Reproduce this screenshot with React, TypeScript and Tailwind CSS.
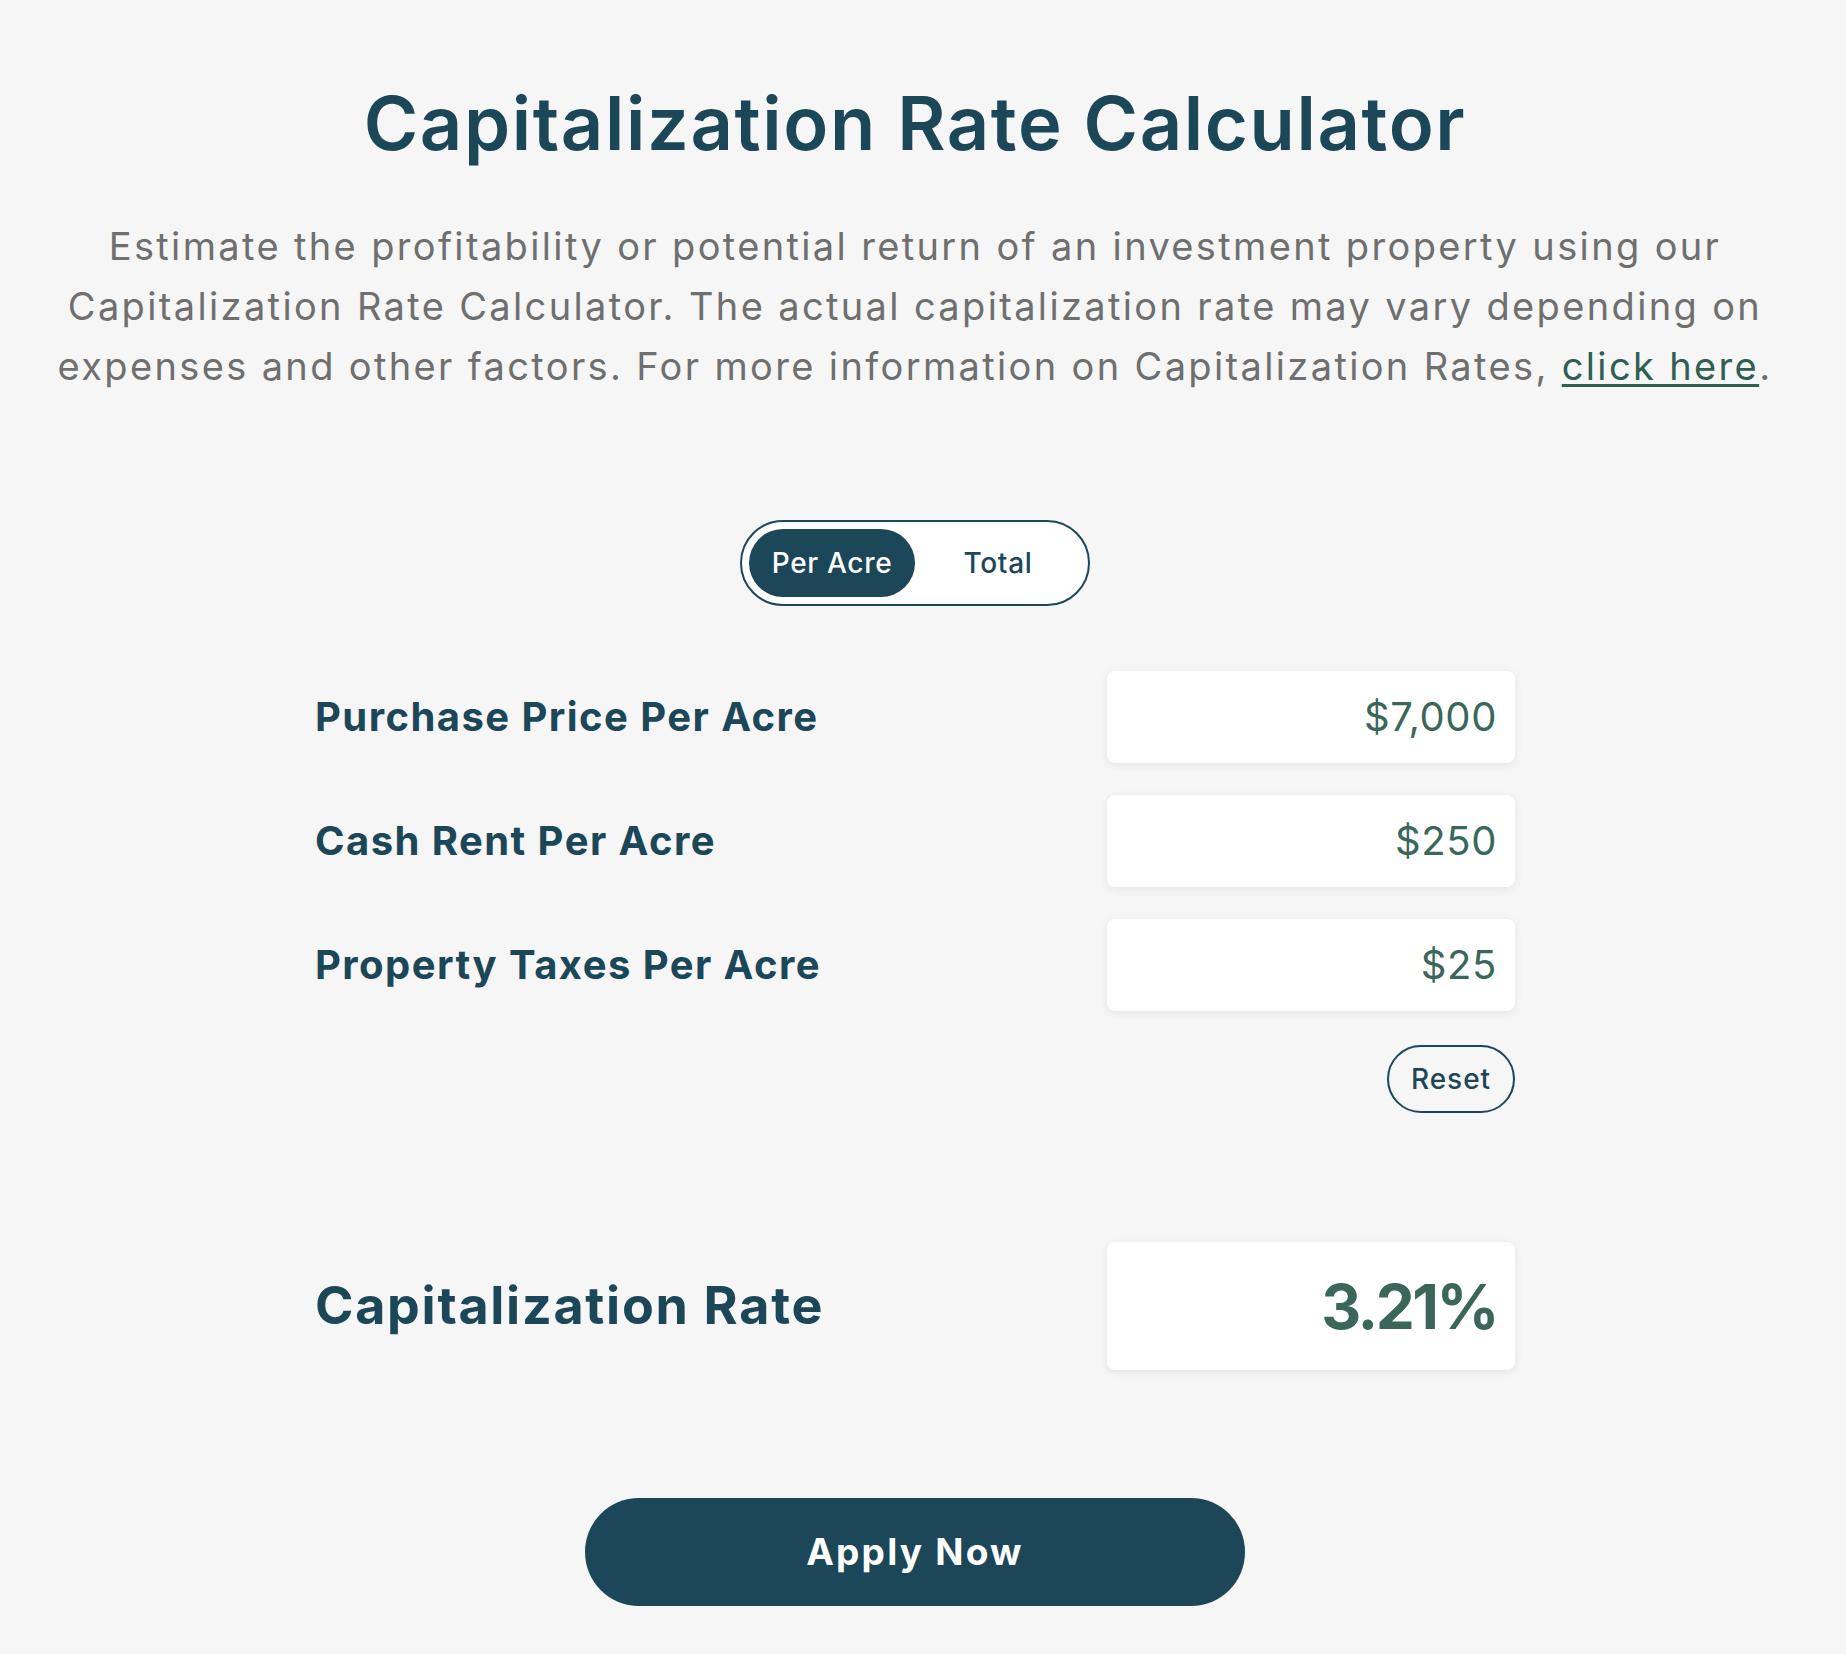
import { useState } from 'react';

const rows = [
    { label: 'Purchase Price Per Acre', value: '$7,000' },
    { label: 'Cash Rent Per Acre', value: '$250' },
    { label: 'Property Taxes Per Acre', value: '$25' },
];

export default function App() {
    const [mode, setMode] = useState<'acre' | 'total'>('acre');

    return (
        <div className="min-h-screen bg-[#f6f6f6] pr-4 font-['Inter',sans-serif] text-[#1c4759]">
            {/* Header */}
            <div className="mx-auto max-w-[1780px] pt-[86px] text-center">
                <h1 className="text-[74px] font-semibold leading-none tracking-[0.022em]">
                    Capitalization Rate Calculator
                </h1>
                <p className="mt-[56px] text-[38px] leading-[60px] tracking-[0.062em] text-[#6f6f6f]">
                    Estimate the profitability or potential return of an investment property using our
                    <br />
                    Capitalization Rate Calculator. The actual capitalization rate may vary depending on
                    <br />
                    expenses and other factors. For more information on Capitalization Rates,{' '}
                    <a href="#" className="text-[#2f5f52] underline underline-offset-4">
                        click here
                    </a>
                    .
                </p>
            </div>

            {/* Per acre / total toggle */}
            <div className="mt-[124px] flex justify-center">
                <div className="flex rounded-full border-2 border-[#1c4759] bg-white p-[7px]">
                    <button
                        onClick={() => setMode('acre')}
                        className={`h-[68px] w-[166px] rounded-full text-[28px] font-medium tracking-[0.025em] ${
                            mode === 'acre' ? 'bg-[#1c4759] text-white' : 'text-[#1c4759]'
                        }`}
                    >
                        Per Acre
                    </button>
                    <button
                        onClick={() => setMode('total')}
                        className={`h-[68px] w-[166px] rounded-full text-[28px] font-medium tracking-[0.025em] ${
                            mode === 'total' ? 'bg-[#1c4759] text-white' : 'text-[#1c4759]'
                        }`}
                    >
                        Total
                    </button>
                </div>
            </div>

            {/* Inputs */}
            <div className="mx-auto mt-[65px] w-[1200px]">
                <div className="flex flex-col gap-[32px]">
                    {rows.map((row) => (
                        <div key={row.label} className="flex items-center justify-between">
                            <span className="text-[40px] font-bold tracking-[0.036em]">{row.label}</span>
                            <div className="flex h-[92px] w-[408px] items-center justify-end rounded-lg bg-white pr-[18px] text-[40px] tracking-[0.015em] text-[#3b675b] shadow-[0_2px_8px_rgba(0,0,0,0.08)]">
                                {row.value}
                            </div>
                        </div>
                    ))}
                </div>

                <div className="mt-[34px] flex justify-end">
                    <button className="h-[68px] w-[128px] rounded-full border-2 border-[#1c4759] text-[28px] font-medium tracking-[0.035em]">
                        Reset
                    </button>
                </div>

                {/* Result */}
                <div className="mt-[129px] flex items-center justify-between">
                    <span className="text-[52px] font-bold tracking-[0.033em]">Capitalization Rate</span>
                    <div className="flex h-[128px] w-[408px] items-center justify-end rounded-lg bg-white pr-[18px] text-[62px] font-bold tracking-[-0.04em] text-[#3b675b] shadow-[0_2px_8px_rgba(0,0,0,0.08)]">
                        3.21%
                    </div>
                </div>
            </div>

            {/* CTA */}
            <div className="mt-[128px] flex justify-center pb-[50px]">
                <button className="h-[108px] w-[660px] rounded-full bg-[#1c4759] text-[37px] font-bold tracking-[0.06em] text-white">
                    Apply Now
                </button>
            </div>
        </div>
    );
}
